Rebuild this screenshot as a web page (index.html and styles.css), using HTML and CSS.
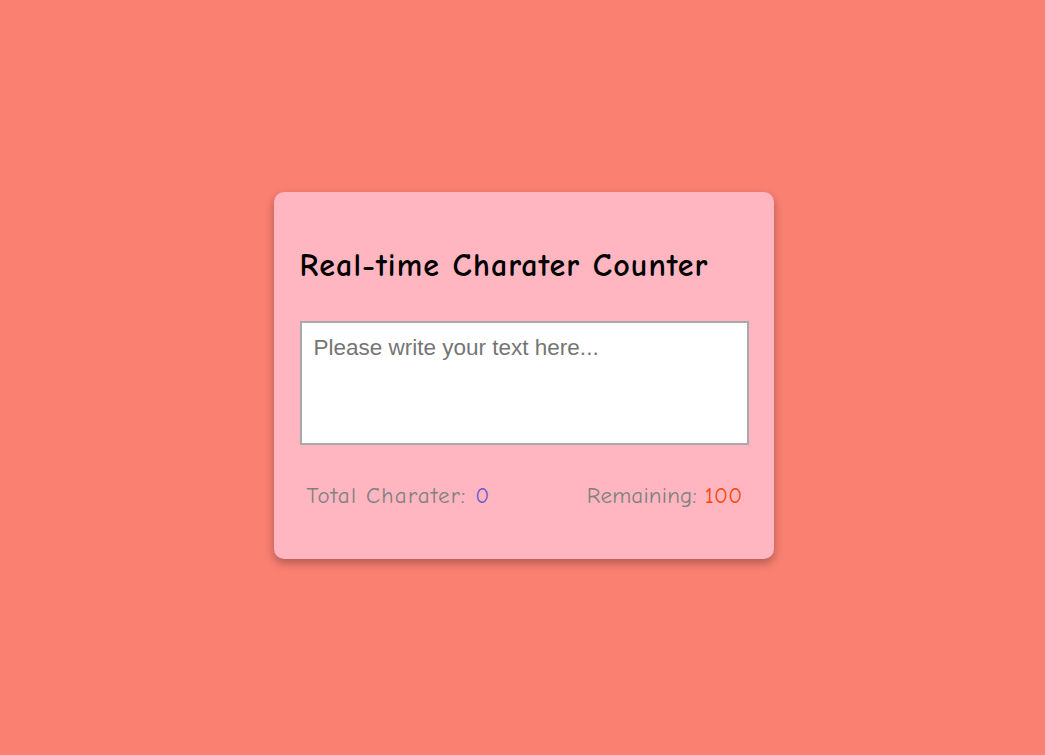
FILE: index.html
```html
<!DOCTYPE html>
<html lang="en">
<head>
<meta charset="UTF-8">
<title>Real-time Charater Counter</title>
<link rel="stylesheet" href="styles.css">
</head>
<body>
  <div class="card">
    <h1 class="title">Real-time Charater Counter</h1>
    <textarea class="input" placeholder="Please write your text here..."></textarea>
    <div class="stats">
      <p class="stat">Total Charater: <span class="total">0</span></p>
      <p class="stat stat-right">Remaining: <span class="remaining">100</span></p>
    </div>
  </div>
</body>
</html>
```
FILE: styles.css
```css
html, body {
  margin: 0;
  padding: 0;
}
body {
  background: #fa8072;
  min-height: 100vh;
  box-sizing: border-box;
  padding: 0 0 5px 2px;
  display: flex;
  align-items: center;
  justify-content: center;
  font-family: "Comic Sans MS", "Comic Neue", cursive;
}
.card {
  width: 500px;
  box-sizing: border-box;
  background: #ffb6c1;
  border-radius: 10px;
  box-shadow: 0 4px 10px rgba(0, 0, 0, 0.3);
  padding: 25px 25px 50px 26px;
  display: flex;
  flex-direction: column;
}
.title {
  font-size: 32px;
  font-weight: bold;
  letter-spacing: 1.1px;
  margin: 30px 0 37px;
  color: #000;
}
.input {
  width: 100%;
  height: 124px;
  box-sizing: border-box;
  border: 2px solid #a9a9a9;
  padding: 12px 12px;
  font-family: "Liberation Sans", Arial, sans-serif;
  font-size: 22.5px;
  resize: none;
  outline: none;
}
.input::placeholder {
  color: #757575;
}
.stats {
  display: flex;
  justify-content: space-between;
  padding: 0 6px 0 7px;
  margin-top: 37px;
}
.stat {
  margin: 0;
  font-size: 23px;
  letter-spacing: 1.2px;
  color: #808080;
}
.stat-right {
  letter-spacing: 0.2px;
}
.total {
  color: #6a5acd;
}
.remaining {
  color: #ff4500;
}
```
